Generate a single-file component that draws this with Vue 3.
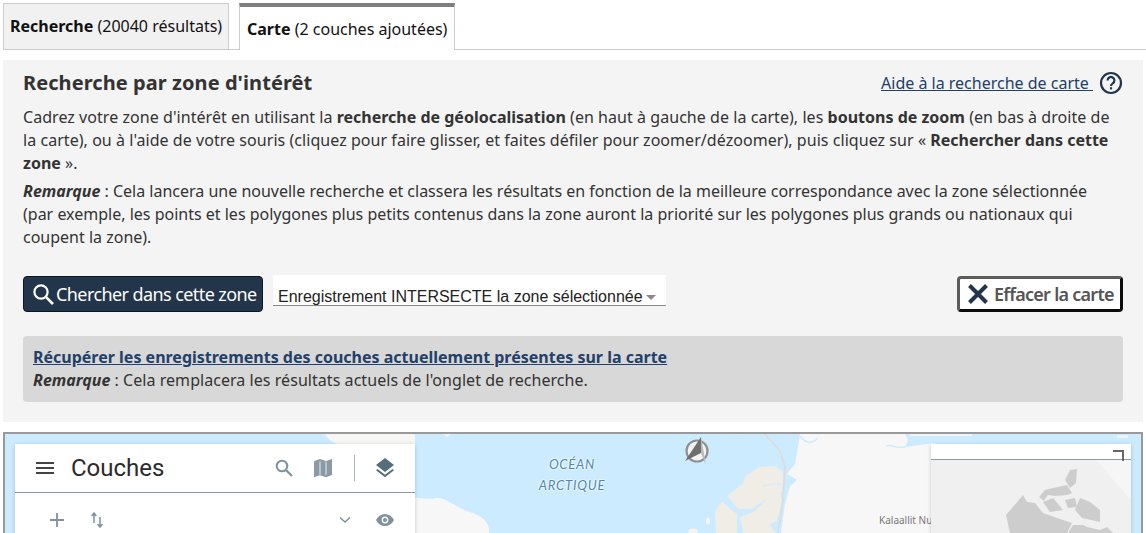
<script setup>
const tabs = [
  { name: 'Recherche', detail: '(20040 résultats)', active: false },
  { name: 'Carte', detail: '(2 couches ajoutées)', active: true }
]
</script>

<template>
  <div class="page">
    <nav class="tabs">
      <div v-for="t in tabs" :key="t.name" class="tab" :class="{ active: t.active }">
        <b>{{ t.name }}</b> {{ t.detail }}
      </div>
    </nav>

    <section class="panel">
      <header class="head">
        <h2>Recherche par zone d'intérêt</h2>
        <div class="help">
          <a href="#">Aide à la recherche de carte </a>
          <svg width="24" height="24" viewBox="0 0 24 24" class="q">
            <circle cx="12" cy="12" r="10" fill="none" stroke="#22354a" stroke-width="2.2"/>
            <path d="M8.600 9.400a3.400 3.400 0 1 1 5.200 2.900c-1.200.8-1.800 1.300-1.800 2.600" fill="none" stroke="#22354a" stroke-width="2.200"/>
            <rect x="10.900" y="16.200" width="2.200" height="2.200" fill="#22354a"/>
          </svg>
        </div>
      </header>
      <p class="p1">Cadrez votre zone d'intérêt en utilisant la <b>recherche de géolocalisation</b> (en haut à gauche de la carte), les <b>boutons de zoom</b> (en bas à droite de la carte), ou à l'aide de votre souris (cliquez pour faire glisser, et faites défiler pour zoomer/dézoomer), puis cliquez sur « <b>Rechercher dans cette zone</b> ».</p>
      <p class="p2"><b><i>Remarque</i></b> : Cela lancera une nouvelle recherche et classera les résultats en fonction de la meilleure correspondance avec la zone sélectionnée (par exemple, les points et les polygones plus petits contenus dans la zone auront la priorité sur les polygones plus grands ou nationaux qui coupent la zone).</p>

      <div class="actions">
        <button class="primary">
          <svg width="24" height="24" viewBox="0 0 24 24"><circle cx="10" cy="10" r="6.600" fill="none" stroke="#fff" stroke-width="2.200"/><path d="M14.800 14.800 22 22" stroke="#fff" stroke-width="2.600"/></svg>
          <span>Chercher dans cette zone</span>
        </button>
        <div class="select">
          <span>Enregistrement INTERSECTE la zone sélectionnée</span>
          <i class="caret"></i>
        </div>
        <button class="clear">
          <svg width="22" height="22" viewBox="0 0 22 22"><path d="M2.500 2.500 19.500 19.500M19.500 2.500 2.500 19.500" stroke="#22354a" stroke-width="4"/></svg>
          <span>Effacer la carte</span>
        </button>
      </div>

      <div class="notice">
        <a href="#">Récupérer les enregistrements des couches actuellement présentes sur la carte</a>
        <div class="note"><b><i>Remarque</i></b> : Cela remplacera les résultats actuels de l'onglet de recherche.</div>
      </div>
    </section>

    <section class="map">
      <svg class="land" width="1140" height="99" viewBox="3 434 1140 99">
        <path d="M325 434H415V446H340C334 442 328 440 325 434Z" fill="#f6f6f4"/>
        <path d="M443 434H451L447 437Z" fill="#f4f4f2"/>
        <path d="M410 496C418 498 428 500 436 498C446 497 456 508 470 512C482 516 490 522 489 533H410Z" fill="#f7f7f7"/>
        <!-- island group -->
        <path d="M727 496 743 484 745 476 760 467 775 466 783 472 783 482 782 492 763 501 752 509 738 509Z" fill="#f0ede6"/>
        <path d="M715 512 722 501 730 509 737 514 737 533H716Z" fill="#f0ede6"/>
        <path d="M740 517 755 511 770 496 780 491 782 501 777 521 770 524 775 533H743Z" fill="#f0ede6"/>
        <path d="M763 486 772 484 782 484" fill="none" stroke="#cdebff" stroke-width="1.200"/>
        <ellipse cx="708" cy="521" rx="2" ry="3.500" fill="#f4f4f2"/>
        <ellipse cx="693" cy="531" rx="5" ry="2.500" fill="#f4f4f2"/>
        <path d="M765 434 780 451 785 467 783 501 778 533" fill="none" stroke="#dcdcdc" stroke-width="1.800"/>
        <!-- mainland right -->
        <path d="M800 434H905L908 440 905 447 920 445 935 443V533H781L785 504 790 486 797 480 787 474 795 464 798 447Z" fill="#f7f7f7"/>
        <path d="M800 436C806 444 812 444 818 438M905 447C895 449 892 444 886 446" fill="none" stroke="#cdebff" stroke-width="1.500"/>
        <path d="M910 434H972V436H910Z" fill="#eef6fa"/>
        <path d="M1117 435H1128V438H1117Z" fill="#e6f4fb"/>
      </svg>

      <div class="ocean"><span>OCÉAN</span><span>ARCTIQUE</span></div>

      <svg class="compass" width="26" height="30" viewBox="0 0 26 30">
        <circle cx="12" cy="14" r="10.500" fill="#f4f4f4" stroke="#8f8f8f" stroke-width="2.200"/>
        <path d="M0 24 16 0V16Z" fill="#6f6f6f"/>
        <path d="M16 0 21 28 16 16Z" fill="#bbb"/>
      </svg>

      <span class="place">Kalaallit Nunaat
(Groenland)</span>

      <aside class="layers">
        <div class="l-head">
          <svg class="ham" width="18" height="14" viewBox="0 0 18 14"><path d="M0 2h18M0 7h18M0 12h18" stroke="#444" stroke-width="2"/></svg>
          <span class="l-title">Couches</span>
          <div class="l-tools">
            <svg width="20" height="20" viewBox="0 0 20 20" class="t1"><circle cx="8" cy="8" r="5.300" fill="none" stroke="#7f929c" stroke-width="2"/><path d="M12 12l6 6" stroke="#7f929c" stroke-width="2.200"/></svg>
            <svg width="20" height="20" viewBox="0 0 20 20" class="t2"><path d="M1 3.200 7 1l6 2 6-2v16l-6 2.200-6-2-6 2Z" fill="#8a9ba5"/><path d="M7 3.400v13.400M13 3.400v13.400" stroke="#fff" stroke-width=".8"/></svg>
            <i class="sep"></i>
            <svg width="20" height="20" viewBox="0 0 20 20" class="t3"><path d="M10 0 19 7l-9 7-9-7Z" fill="#546e7a"/><path d="M2.500 11 10 16.800 17.500 11l1.500 1.200-9 7-9-7Z" fill="#546e7a"/></svg>
          </div>
        </div>
        <div class="l-row">
          <svg width="16" height="16" viewBox="0 0 16 16" class="r1"><path d="M8 1v14M1 8h14" stroke="#7f929c" stroke-width="1.800"/></svg>
          <svg width="14" height="16" viewBox="0 0 14 16" class="r2"><path d="M4 11V2M1.700 4 4 1l2.300 3" fill="none" stroke="#7f929c" stroke-width="1.500"/><path d="M10 5v10M7.500 12l2.500 3 2.500-3" fill="none" stroke="#7f929c" stroke-width="1.500"/></svg>
          <svg width="14" height="10" viewBox="0 0 14 10" class="r3"><path d="M2 2.500 7 7l5-4.500" fill="none" stroke="#7f929c" stroke-width="1.500"/></svg>
          <svg width="20" height="14" viewBox="0 0 20 14" class="r4"><path d="M1 7c2-4 5.500-6 9-6s7 2 9 6c-2 4-5.500 6-9 6s-7-2-9-6Z" fill="#7f929c"/><circle cx="10" cy="7" r="3.400" fill="#fff"/><circle cx="10" cy="7" r="2" fill="#7f929c"/></svg>
        </div>
      </aside>

      <aside class="mini">
        <div class="mini-head"></div>
        <div class="mini-body">
          <svg width="200" height="73" viewBox="931 460 200 73">
            <path d="M1131 500 1096 460H1131Z" fill="#f6f6f6"/>
            <g fill="#cdcdcd">
              <path d="M1006 515 1023 495 1027 502 1035 503 1043 513 1057 518 1072 523 1067 533H1010Z"/>
              <path d="M1068 533 1073 525 1083 525 1087 527 1100 530 1107 527 1113 533Z"/>
              <path d="M1075 510 1082 518 1100 522 1100 510 1090 502 1080 498Z"/>
              <path d="M1065 480 1070 470 1077 469 1076 483 1070 488Z"/>
              <path d="M1039 497 1045 490 1053 488 1067 485 1072 493 1067 495 1055 496 1048 495 1044 501Z"/>
              <path d="M1043 502 1053 498 1063 510 1050 512Z"/>
              <path d="M1065 500 1075 498 1077 507 1068 508Z"/>
            </g>
          </svg>
        </div>
        <i class="corner"></i>
      </aside>
    </section>
  </div>
</template>

<style>
html, body { margin: 0; background: #fff; overflow: hidden; }
</style>

<style scoped>
.page { width: 1146px; height: 533px; overflow: hidden; font-family: "Noto Sans", sans-serif; color: #333; font-size: 16px; }
.tabs { height: 46px; padding-top: 3px; margin-left: 3px; display: flex; gap: 10px; align-items: flex-start; border-bottom: 1px solid #ccc; }
.tab { color: #111; white-space: nowrap; box-sizing: border-box; height: 47px; line-height: 21px; }
.tab:not(.active) { padding: 12px 0 0 6px; width: 226px; background: #f1f1f1; border: 1px solid #ccc; }
.tab.active { width: 216px; padding: 12px 0 0 7px; background: #fff; border: 1px solid #ccc; border-top: 4px solid #7f7f7f; border-bottom: 0; }
.panel { margin: 10px 3px 0; height: 362px; box-sizing: border-box; background: #f4f4f4; padding: 10px 20px 0; }
.head { display: flex; justify-content: space-between; align-items: center; height: 26px; }
h2 { margin: 0; font: bold 20px/26px "Noto Sans", sans-serif; letter-spacing: .07px; color: #333; }
.help { display: flex; align-items: center; }
.help a { color: #22406a; font-size: 16px; white-space: pre; }
.q { margin-left: 6px; }
p { margin: 0; font-size: 16px; line-height: 23px; color: #333; }
.p1 { margin-top: 10px; letter-spacing: .05px; }
.p1 b { letter-spacing: 0; }
.p2 { margin-top: 5px; width: 1085px; }
.actions { display: flex; align-items: flex-start; margin-top: 27px; height: 36px; }
button { font-family: "Noto Sans", sans-serif; cursor: pointer; display: flex; align-items: center; padding: 0; }
.primary { width: 240px; height: 36px; box-sizing: border-box; background: #22354a; color: #fff; border: 1px solid #0c1722; border-radius: 4px; font-size: 18px; letter-spacing: -0.58px; padding-left: 7px; white-space: nowrap; }
.primary span { margin-left: 1px; }
.select { width: 393px; height: 31px; margin: -1px 0 0 10px; box-sizing: border-box; background: #fff; border-bottom: 1px solid #888; font: 16px "Liberation Sans", sans-serif; color: #222; padding: 14px 0 0 5px; display: flex; align-items: center; gap: 3px; white-space: nowrap; }
.caret { display: block; width: 0; height: 0; border: 5px solid transparent; border-top: 5px solid #888; border-bottom: 0; margin-top: 1px; }
.clear { margin-left: auto; width: 166px; height: 36px; box-sizing: border-box; background: #fff; border: 3px solid; border-color: #5c5c5c #0c0c0c #0c0c0c #5c5c5c; border-radius: 4px; color: #555; font-size: 18px; font-weight: 600; letter-spacing: -0.73px; padding-left: 7px; gap: 5px; white-space: nowrap; }
.notice { margin-top: 24px; height: 66px; box-sizing: border-box; background: #d8d8d8; border-radius: 4px; padding: 10px; line-height: 23px; }
.notice a { color: #22406a; font-weight: 700; }
.note { letter-spacing: .05px; }
.note b { letter-spacing: 0; }
.map { position: relative; margin: 10px 3px 0; height: 101px; box-sizing: border-box; background: #cdebff; border: 2px solid #999; border-bottom: 0; overflow: hidden; }
.land { position: absolute; left: -2px; top: 0; }
.ocean { position: absolute; left: 527px; top: 22px; width: 80px; display: flex; flex-direction: column; align-items: center; gap: 4px; font: italic 13px/17px "Lato", sans-serif; letter-spacing: .8px; color: #4d86b3; text-shadow: 0 0 2px #fff, 0 0 2px #fff, 0 0 2px #fff; }
.compass { position: absolute; left: 680px; top: 3px; }
.place { position: absolute; left: 874px; top: 80px; font-size: 10px; line-height: 12px; color: #777; white-space: pre; }
.layers { position: absolute; left: 10px; top: 10px; width: 400px; height: 100px; background: #fff; box-shadow: 0 1px 4px rgba(0,0,0,.2); }
.l-head { height: 48px; display: flex; align-items: center; border-bottom: 1px solid #8a9ba5; }
.ham { margin-left: 21px; }
.l-title { margin-left: 17px; font: 24px Roboto, sans-serif; color: #2b2b2b; }
.l-tools { margin-left: auto; display: flex; align-items: center; }
.t2 { margin-left: 19px; }
.sep { display: block; width: 1px; height: 26px; background: #aab6bc; margin-left: 21px; }
.t3 { margin-left: 20px; margin-right: 20px; }
.l-row { display: flex; align-items: center; height: 56px; margin-top: -1px; }
.r1 { margin-left: 34px; }
.r2 { margin-left: 25px; }
.r3 { margin-left: auto; }
.r4 { margin-left: 23px; margin-right: 20px; }
.mini { position: absolute; left: 926px; top: 10px; width: 200px; height: 100px; background: #fff; box-shadow: 0 1px 4px rgba(0,0,0,.2); }
.mini-head { height: 15px; border-bottom: 1px solid #8a9ba5; }
.corner { position: absolute; right: 7px; top: 6px; width: 11px; height: 11px; box-sizing: border-box; border-top: 2px solid #666; border-right: 2px solid #666; }
.mini-body { height: 84px; background: #f0f0f0; overflow: hidden; }
.mini-body svg { display: block; }
</style>
